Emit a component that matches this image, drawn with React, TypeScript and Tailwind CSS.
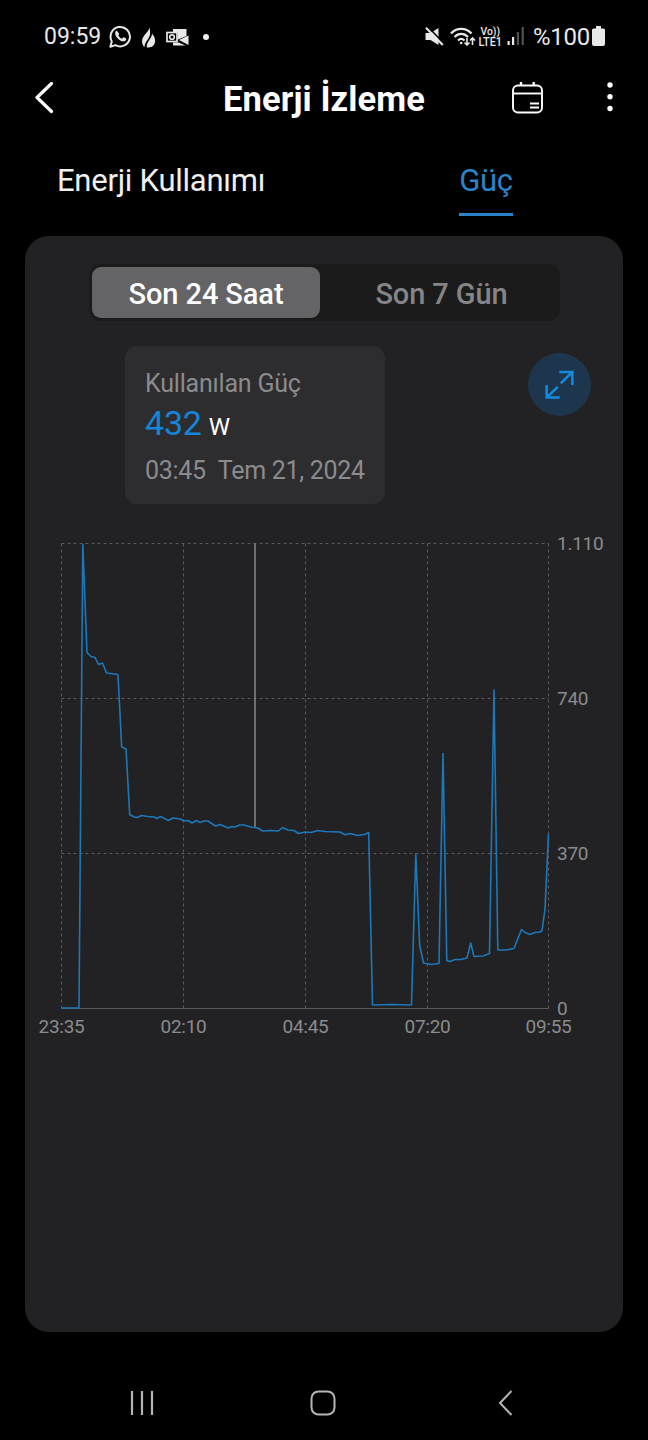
import React, { useState } from 'react';

const X_TICKS = [
  { x: 61.5, label: '23:35' },
  { x: 183.5, label: '02:10' },
  { x: 305.5, label: '04:45' },
  { x: 427.5, label: '07:20' },
  { x: 548.5, label: '09:55' },
];

const Y_TICKS = [
  { y: 543.5, label: '1.110' },
  { y: 698.5, label: '740' },
  { y: 853.5, label: '370' },
  { y: 1008.5, label: '0' },
];

const POWER_LINE = [
  '61.5,1008 79,1008 82.8,544.5 87,652.5 91,656.5 95,657.5 98.5,664.5 102.5,663 106.5,673 117.5,674.5 118,675.5',
  '121.7,747 126,749 129.7,814.5 134,817 137.5,817.5 141.5,815.5 148,816.5 154,817 157,818.5 160.5,816.5',
  '168.5,820.5 173,818 180,819 184,821 188,820.5 192,823 196.5,820.5 200,822.5 204,821 208,821 215.5,826',
  '220,824.5 228,828 232,826.5 235,827 239.5,825 244,825 252,827.2 258,828 262.5,831 270,830.5 278.5,831',
  '282.5,827.5 288,830 294,830.5 298.5,833.5 305,832 311,832.5 318,830.5 325,831.5 340,832 345,834.8',
  '350,833.5 358,835.5 365,834.3 368.7,832.5 372.5,1005 392,1004.5 411.5,1005 415.8,854 419.7,945.5 423.5,963',
  '431,964.5 439,963.5 443,753.5 446.8,960.5 450,961.5 455,959.5 461,959.5 467,958 470.7,943 474,956.5',
  '483,956 489.5,953.5 494,690 497.8,950 506,950 514,948.5 521.5,929.5 525,932.5 530,934.5 535,932.5',
  '540,932 542,930.5 545,909 548.5,834',
].join(' ');

function StatusBar() {
  return (
    <div className="flex h-[72px] items-center justify-between pl-11 pr-[43px] text-[#e8e8e8]">
      <div className="flex items-center">
        <span className="w-[58px] whitespace-nowrap pt-0.5 text-[23px] leading-7">09:59</span>
        {/* WhatsApp */}
        <svg className="ml-[7px] mt-px h-[23px] w-[23px]" viewBox="0 0 23 23" fill="none">
          <path d="M1.3 21.7l1.5-5.3a9.7 9.7 0 1 1 3.7 3.7z" stroke="currentColor" strokeWidth="2" strokeLinejoin="round" />
          <path
            d="M8.1 5.9c-.5-.3-1 0-1.4.5-2.6 3.3 4.6 11.7 9.3 9.6 1-.5 1.3-1.5 1.2-2.3-.6-.6-1.7-1.1-2.5-1.4-.6 0-1 1.1-1.6 1.4-1.6-.5-3-1.8-3.7-3.3.2-.6.9-1 .8-1.6z"
            fill="currentColor"
          />
        </svg>
        {/* Flame */}
        <svg className="ml-[9px] mt-0.5 h-[21px] w-[15px]" viewBox="0 0 15 22" fill="currentColor">
          <path d="M8.5.5C8 5 .8 8.8.7 15c0 2.6 1 4.7 2.6 6C3.6 14.5 9.8 12 9.2 5.4 9.1 3.4 8.9 2 8.5.5z" />
          <path d="M11.2 7.2C11 12 5.5 15.5 5.6 21.2c5 1.1 8.8-1.9 8.8-6.8 0-2.8-1.3-5.5-3.2-7.2z" />
        </svg>
        {/* Outlook */}
        <svg className="ml-[10px] mt-0.5 h-[18px] w-[23px]" viewBox="0 0 23 18" fill="none">
          <path d="M7 1h13.5v7L12 11.5V4.5H7z" fill="currentColor" />
          <path d="M22.5 7.5V17L13 12z" fill="currentColor" />
          <path d="M7 14.5h5.5l7 3H7z" fill="currentColor" />
          <rect x="1" y="4.5" width="10" height="9" stroke="currentColor" strokeWidth="1.7" />
          <circle cx="6" cy="9" r="2.3" stroke="currentColor" strokeWidth="1.6" />
        </svg>
        <span className="ml-[14px] mt-0.5 h-1.5 w-1.5 rounded-full bg-[#f0f0f0]" />
      </div>
      <div className="flex items-center">
        {/* Muted speaker */}
        <svg className="h-[19px] w-[19px]" viewBox="0 0 19 19">
          <path d="M.5 6h5l8-5v17l-8-5h-5z" fill="currentColor" />
          <path d="M2.5-.5L19.5 17" stroke="#000" strokeWidth="1.6" />
          <path d="M1 .8L17.8 18" stroke="currentColor" strokeWidth="2" />
        </svg>
        {/* Wi-Fi */}
        <svg className="ml-[6px] h-[19px] w-[26px]" viewBox="0 0 26 19" fill="none" stroke="currentColor">
          <path d="M1 6.5c5.5-6.200 15-6.200 20.500 0M4.500 10c4-4.200 9.500-4.200 13.500 0" strokeWidth="2.2" />
          <path d="M8 13.5c2-2 4.500-2 6.500 0" strokeWidth="2" />
          <circle cx="11.2" cy="16" r="1.3" fill="currentColor" stroke="none" />
          <path d="M17 11v7m-2.500-2.500L17 18l2.500-2.500M22.500 18v-7m-2.500 2.500l2.500-2.500 2.500 2.500" strokeWidth="1.6" />
        </svg>
        {/* VoLTE label */}
        <svg className="ml-0.5 h-[22px] w-[25px]" viewBox="0 0 25 22" fill="currentColor" fontWeight="500">
          <text x="2.5" y="9.5" fontSize="11.5" textLength="19.5" lengthAdjust="spacingAndGlyphs">Vo))</text>
          <text x="0.5" y="20.5" fontSize="12" textLength="23.5" lengthAdjust="spacingAndGlyphs">LTE1</text>
        </svg>
        {/* Signal strength */}
        <svg className="ml-[4px] h-[18px] w-[18px]" viewBox="0 0 18 18" fill="currentColor">
          <rect x="0.5" y="14" width="2.2" height="4" />
          <rect x="5" y="10" width="2.2" height="8" />
          <rect x="9.8" y="5" width="2.2" height="13" opacity="0.35" />
          <rect x="14.6" y="0" width="2.2" height="18" opacity="0.35" />
        </svg>
        <span className="ml-2 w-[58px] whitespace-nowrap pt-px text-[24px] leading-7 tracking-[-0.3px]">%100</span>
        <svg className="ml-px h-5 w-[13px]" viewBox="0 0 13 20" fill="currentColor">
          <path d="M4 0h5v2.5h2.500q1.500 0 1.500 1.500v14q0 2-2 2H2q-2 0-2-2V4q0-1.500 1.500-1.500H4z" />
        </svg>
      </div>
    </div>
  );
}

function Header() {
  return (
    <header className="relative flex h-[52px] items-center justify-between pl-[34px] pr-[35px]">
      <button aria-label="Geri">
        <svg className="h-8 w-5" viewBox="0 0 20 32" fill="none">
          <path d="M17.5 1.5L3 15.5l14.500 14" stroke="#fff" strokeWidth="3.2" strokeLinecap="round" strokeLinejoin="round" />
        </svg>
      </button>
      <h1 className="absolute inset-x-0 pt-0.5 text-center text-[34.5px] font-bold leading-10 tracking-[0.1px] text-white">
        Enerji İzleme
      </h1>
      <div className="flex items-center">
        <button aria-label="Takvim">
          <svg className="h-8 w-[31px]" viewBox="0 0 31 32" fill="none" stroke="#fff">
            <rect x="1" y="3.5" width="29" height="27" rx="5" strokeWidth="1.9" />
            <path d="M1 11.5h29" strokeWidth="1.9" />
            <path d="M9 0V3.5M21.7 0V3.5" strokeWidth="2.4" />
            <path d="M18 21.5h9M18 25.5h9" strokeWidth="2" />
          </svg>
        </button>
        <button aria-label="Menü" className="ml-16">
          <svg className="h-8 w-[6px]" viewBox="0 0 6 32" fill="#fff">
            <circle cx="3" cy="3" r="2.7" />
            <circle cx="3" cy="14.8" r="2.7" />
            <circle cx="3" cy="26.5" r="2.7" />
          </svg>
        </button>
      </div>
    </header>
  );
}

function PowerChart() {
  return (
    <svg className="block h-[530px] w-[598px]" viewBox="25 524 598 530" fill="none">
      <g stroke="#5b5b5d" strokeDasharray="3 3">
        {X_TICKS.map((t) => (
          <path key={t.label} d={`M${t.x} 543.5V1008.5`} />
        ))}
        {Y_TICKS.slice(0, 3).map((t) => (
          <path key={t.label} d={`M61.5 ${t.y}H548.5`} />
        ))}
      </g>
      <path d="M61.5 1008.5H548.5" stroke="#5b5b5d" />
      <path d="M255 543.5V827.5" stroke="#88888a" strokeWidth="1.5" />
      <polyline points={POWER_LINE} stroke="#1c78b8" strokeWidth="1.6" strokeLinejoin="round" />
      <g fill="#8b8b8d" fontSize="19" letterSpacing="-0.25">
        {Y_TICKS.map((t) => (
          <text key={t.label} x="557" y={t.y + 6}>{t.label}</text>
        ))}
        {X_TICKS.map((t) => (
          <text key={t.label} x={t.x} y="1032.5" textAnchor="middle">{t.label}</text>
        ))}
      </g>
    </svg>
  );
}

function NavBar() {
  return (
    <nav className="flex h-[108px] items-center pl-[130px] pt-[34px]">
      <svg className="h-[26px] w-6" viewBox="0 0 24 26" stroke="#b5b5b5" strokeWidth="2.2">
        <path d="M2 1v24M12 1v24M22 1v24" />
      </svg>
      <svg className="ml-[156px] h-[26px] w-[26px]" viewBox="0 0 26 26" fill="none">
        <rect x="1.5" y="1.5" width="23" height="23" rx="7" stroke="#b5b5b5" strokeWidth="2" />
      </svg>
      <svg className="ml-[162px] h-[26px] w-[15px]" viewBox="0 0 15 26" fill="none">
        <path d="M13.5 1L2 13l11.500 12" stroke="#b5b5b5" strokeWidth="2" />
      </svg>
    </nav>
  );
}

export default function App() {
  const [range, setRange] = useState<'day' | 'week'>('day');

  return (
    <div className="h-[1440px] w-[648px] overflow-hidden bg-black font-['Roboto',sans-serif]">
      <StatusBar />
      <Header />

      <div className="flex h-28 items-start pl-[57px] pt-[38px] text-[31px] leading-[38px]">
        <button className="w-[208px] whitespace-nowrap text-left tracking-[-0.25px] text-[#f0f0f0]">
          Enerji Kullanımı
        </button>
        <button className="ml-[194px] flex w-[54px] flex-col items-center text-[#2a84c9]">
          <span className="tracking-[-0.25px]">Güç</span>
          <span className="mt-[13px] h-[3px] w-full bg-[#2a84c9]" />
        </button>
      </div>

      <main className="ml-[25px] h-[1096px] w-[598px] rounded-[24px] bg-[#222224] pt-7">
        <div className="ml-16 flex h-[57px] w-[471px] rounded-[12px] bg-[#1b1b1c] p-[3px] text-[29px] font-medium">
          <button
            onClick={() => setRange('day')}
            className={`w-[228px] rounded-[9px] pt-1 tracking-[-0.1px] ${range === 'day' ? 'bg-[#646466] text-white' : 'text-[#858587]'}`}
          >
            Son 24 Saat
          </button>
          <button
            onClick={() => setRange('week')}
            className={`flex-1 rounded-[9px] pl-[6px] pt-1 tracking-[-0.1px] ${range === 'week' ? 'bg-[#646466] text-white' : 'text-[#858587]'}`}
          >
            Son 7 Gün
          </button>
        </div>

        <div className="ml-[100px] mt-[25px] flex justify-between pr-8">
          <div className="h-[158px] w-[260px] whitespace-nowrap rounded-[12px] bg-[#2d2d2f] pl-5 pt-[23px] text-[25px] tracking-[-0.2px] text-[#8b8b8d]">
            <div className="leading-[30px]">Kullanılan Güç</div>
            <div className="mt-1 flex items-baseline leading-10">
              <span className="text-[34px] text-[#1485d8]">432</span>
              <span className="ml-[7px] text-[24px] text-white">W</span>
            </div>
            <div className="mt-[9px] flex gap-3 leading-[30px]">
              <span className="tracking-[-0.3px]">03:45</span>
              <span className="tracking-[-0.3px]">Tem 21, 2024</span>
            </div>
          </div>
          <button
            aria-label="Genişlet"
            className="mt-[7px] flex h-[63px] w-[63px] items-center justify-center rounded-full bg-[#1d364d]"
          >
            <svg className="h-[29px] w-[29px]" viewBox="0 0 30 30" fill="none" stroke="#128be0" strokeWidth="2.6">
              <path d="M14.8 2H28.3V15.5M27.8 2.5L16.3 13.8M1.7 15.5V28.5H15.2M2.2 28L13.2 17.5" />
            </svg>
          </button>
        </div>

        <div className="mt-5">
          <PowerChart />
        </div>
      </main>

      <NavBar />
    </div>
  );
}
